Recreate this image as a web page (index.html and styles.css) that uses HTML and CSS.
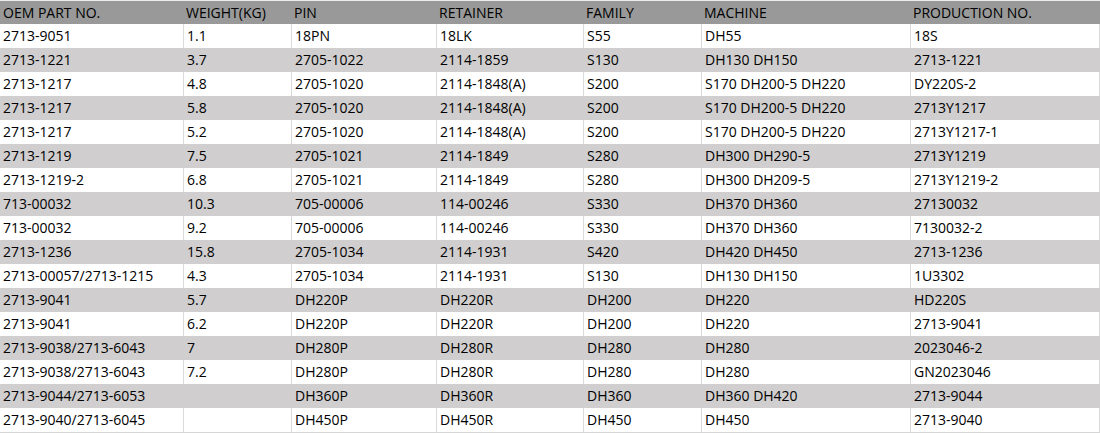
FILE: index.html
```html
<!DOCTYPE html>
<html>
<head>
<meta charset="utf-8">
<link rel="stylesheet" href="styles.css">
</head>
<body>
<table class="parts">
<colgroup>
<col class="c1"><col class="c2"><col class="c3"><col class="c4"><col class="c5"><col class="c6"><col class="c7">
</colgroup>
<thead>
<tr><th>OEM PART NO.</th><th>WEIGHT(KG)</th><th>PIN</th><th>RETAINER</th><th>FAMILY</th><th>MACHINE</th><th>PRODUCTION NO.</th></tr>
</thead>
<tbody>
<tr><td>2713-9051</td><td>1.1</td><td>18PN</td><td>18LK</td><td>S55</td><td>DH55</td><td>18S</td></tr>
<tr><td>2713-1221</td><td>3.7</td><td>2705-1022</td><td>2114-1859</td><td>S130</td><td>DH130 DH150</td><td>2713-1221</td></tr>
<tr><td>2713-1217</td><td>4.8</td><td>2705-1020</td><td>2114-1848(A)</td><td>S200</td><td>S170 DH200-5 DH220</td><td>DY220S-2</td></tr>
<tr><td>2713-1217</td><td>5.8</td><td>2705-1020</td><td>2114-1848(A)</td><td>S200</td><td>S170 DH200-5 DH220</td><td>2713Y1217</td></tr>
<tr><td>2713-1217</td><td>5.2</td><td>2705-1020</td><td>2114-1848(A)</td><td>S200</td><td>S170 DH200-5 DH220</td><td>2713Y1217-1</td></tr>
<tr><td>2713-1219</td><td>7.5</td><td>2705-1021</td><td>2114-1849</td><td>S280</td><td>DH300 DH290-5</td><td>2713Y1219</td></tr>
<tr><td>2713-1219-2</td><td>6.8</td><td>2705-1021</td><td>2114-1849</td><td>S280</td><td>DH300 DH209-5</td><td>2713Y1219-2</td></tr>
<tr><td>713-00032</td><td>10.3</td><td>705-00006</td><td>114-00246</td><td>S330</td><td>DH370 DH360</td><td>27130032</td></tr>
<tr><td>713-00032</td><td>9.2</td><td>705-00006</td><td>114-00246</td><td>S330</td><td>DH370 DH360</td><td>7130032-2</td></tr>
<tr><td>2713-1236</td><td>15.8</td><td>2705-1034</td><td>2114-1931</td><td>S420</td><td>DH420 DH450</td><td>2713-1236</td></tr>
<tr><td>2713-00057/2713-1215</td><td>4.3</td><td>2705-1034</td><td>2114-1931</td><td>S130</td><td>DH130 DH150</td><td>1U3302</td></tr>
<tr><td>2713-9041</td><td>5.7</td><td>DH220P</td><td>DH220R</td><td>DH200</td><td>DH220</td><td>HD220S</td></tr>
<tr><td>2713-9041</td><td>6.2</td><td>DH220P</td><td>DH220R</td><td>DH200</td><td>DH220</td><td>2713-9041</td></tr>
<tr><td>2713-9038/2713-6043</td><td>7</td><td>DH280P</td><td>DH280R</td><td>DH280</td><td>DH280</td><td>2023046-2</td></tr>
<tr><td>2713-9038/2713-6043</td><td>7.2</td><td>DH280P</td><td>DH280R</td><td>DH280</td><td>DH280</td><td>GN2023046</td></tr>
<tr><td>2713-9044/2713-6053</td><td></td><td>DH360P</td><td>DH360R</td><td>DH360</td><td>DH360 DH420</td><td>2713-9044</td></tr>
<tr><td>2713-9040/2713-6045</td><td></td><td>DH450P</td><td>DH450R</td><td>DH450</td><td>DH450</td><td>2713-9040</td></tr>
</tbody>
</table>
</body>
</html>
```

FILE: styles.css
```css
html, body {
  margin: 0;
  padding: 0;
  background: #ffffff;
}

.parts {
  width: 1100px;
  table-layout: fixed;
  border-collapse: separate;
  border-spacing: 0;
  font-family: "Open Sans", "Liberation Sans", sans-serif;
  font-size: 14px;
  color: #000000;
  border-bottom: 1px solid #d6d6d6;
}

.c1 { width: 183px; }
.c2 { width: 108px; }
.c3 { width: 145px; }
.c4 { width: 147px; }
.c5 { width: 118px; }
.c6 { width: 209px; }
.c7 { width: 190px; }

.parts th,
.parts td {
  box-sizing: border-box;
  height: 24px;
  padding: 0 3px;
  line-height: 24px;
  text-align: left;
  font-weight: normal;
  white-space: nowrap;
  overflow: hidden;
  vertical-align: middle;
}

.parts th {
  background: #999999;
  border-top: 1px solid #ececec;
  line-height: 23px;
  color: #000000;
}

.parts td + td {
  border-left: 1px solid #d9d9d9;
}

.parts td:last-child {
  border-right: 1px solid #d9d9d9;
}

.parts tbody tr:nth-child(even) td {
  background: #d0cece;
  border-color: #d0cece;
}
```
